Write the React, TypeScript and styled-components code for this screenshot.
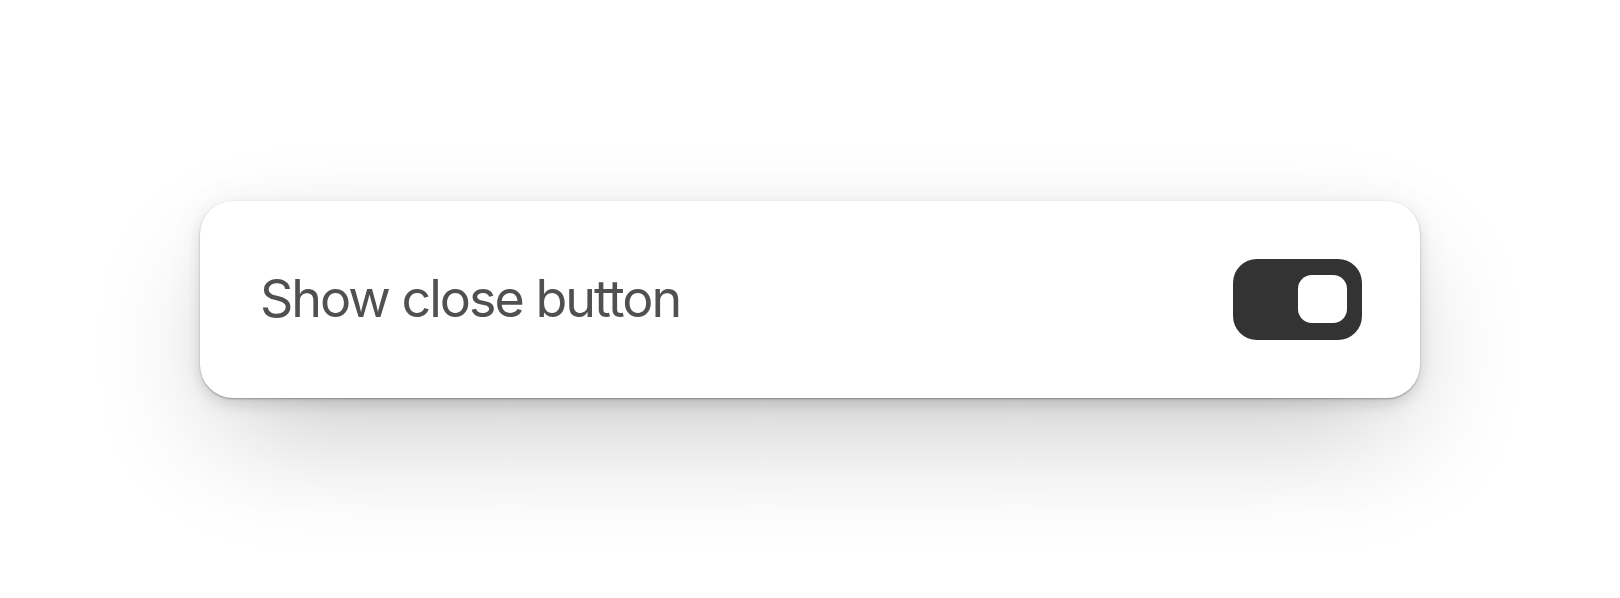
import React, { useState } from 'react';
import styled, { createGlobalStyle } from 'styled-components';

const GlobalStyle = createGlobalStyle`
  html, body {
    margin: 0;
    padding: 0;
    background: #ffffff;
  }
  #root {
    min-height: 100vh;
  }
`;

const Page = styled.div`
  min-height: 100vh;
  display: flex;
  align-items: center;
  justify-content: center;
  font-family: Inter, "Noto Sans", sans-serif;
`;

const Card = styled.div`
  width: 1220px;
  box-sizing: border-box;
  padding: 58px;
  display: flex;
  align-items: center;
  justify-content: space-between;
  background: #ffffff;
  border-radius: 33px;
  box-shadow:
    0 1px 2px rgba(0, 0, 0, 0.3),
    0 6px 14px rgba(0, 0, 0, 0.12),
    0 50px 130px -25px rgba(0, 0, 0, 0.24),
    0 0 40px rgba(0, 0, 0, 0.04);
`;

const Label = styled.span`
  font-size: 52px;
  line-height: 1;
  color: #505050;
  letter-spacing: -2px;
  padding-left: 2px;
`;

const Switch = styled.button<{ $on: boolean }>`
  width: 129px;
  height: 81px;
  box-sizing: border-box;
  padding: 16px 15px;
  border: none;
  border-radius: 24px;
  background: #333333;
  display: flex;
  align-items: center;
  justify-content: ${(p) => (p.$on ? 'flex-end' : 'flex-start')};
  cursor: pointer;
`;

const Knob = styled.span`
  width: 49px;
  height: 48px;
  border-radius: 14px;
  background: #ffffff;
`;

const App = () => {
  const [on, setOn] = useState(true);

  return (
    <>
      <GlobalStyle />
      <Page>
        <Card>
          <Label>Show close button</Label>
          <Switch $on={on} onClick={() => setOn(!on)} aria-pressed={on}>
            <Knob />
          </Switch>
        </Card>
      </Page>
    </>
  );
};

export default App;
